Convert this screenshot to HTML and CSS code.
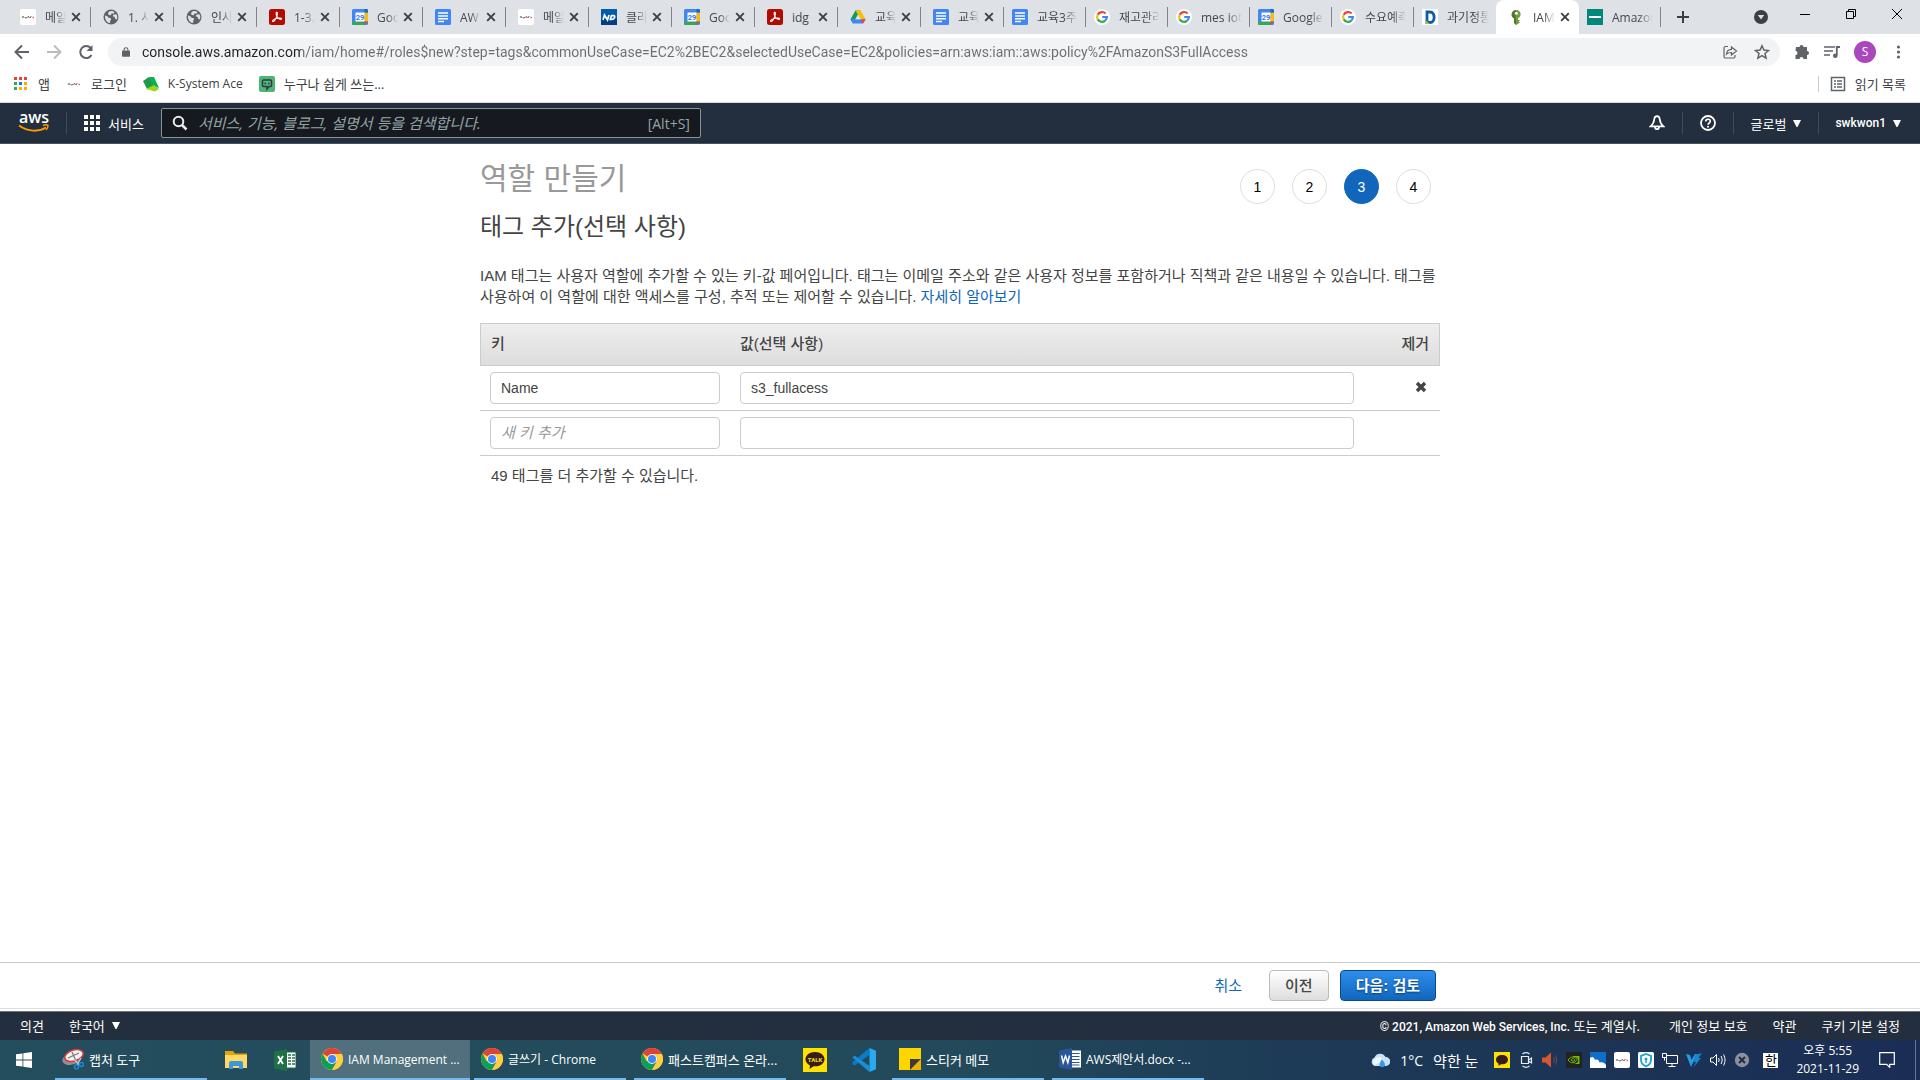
FILE: index.html
```html
<!DOCTYPE html>
<html lang="ko">
<head>
    <meta charset="UTF-8">
    <meta name="viewport" content="width=device-width, initial-scale=1.0">
    <title>IAM Management Console</title>
    <link rel="stylesheet" href="styles.css">
</head>
<body>
    <!-- shared icons -->
    <svg class="sprite" aria-hidden="true">
        <symbol id="i-close" viewBox="0 0 10 10"><path d="M1.2 1.2l7.6 7.6M8.8 1.2L1.2 8.8" stroke="#3c4043" stroke-width="1.9" fill="none"/></symbol>
        <symbol id="i-brand" viewBox="0 0 16 16"><rect width="16" height="16" rx="2" fill="#fff"/><path d="M2 9l1-2 1 2M5 8v1h1.500V8M9.500 8v1M10.500 9V7.500h1" stroke="#5b6a80" stroke-width=".8" fill="none"/><path d="M7.500 9l.8-2 1 2M12.500 8l1.500 1M14 8l-1.500 1" stroke="#c0505a" stroke-width=".8" fill="none"/></symbol>
        <symbol id="i-globe" viewBox="0 0 16 16"><circle cx="8" cy="8" r="7.500" fill="#5f6368"/><path d="M2 6.500c2 .3 3 1 3.500 2.200l2.200.5c.8.6.2 1.600-.4 2.300l-.3 2.600C4 13.800 1.800 11 2 6.500zM6 2.600c1.700-.8 4-.8 5.500.3l-.8 1.600H8.500L7.800 6.200 5.700 6 5 4.200zM13.700 5.500c.8 1.800.7 3.700 0 5l-1.500-.6-.5-2-1.900-.6.5-1.600 2-.4z" fill="#dee1e6"/></symbol>
        <symbol id="i-pdf" viewBox="0 0 16 16"><rect width="16" height="16" rx="2.500" fill="#b30b00"/><path d="M7.400 3.300c1.400-.6 1.100 2.300.4 4.100C7 9.600 5.200 12.700 3.900 12.500c-1.300-.5 1-2.200 3.200-2.900 2.400-.8 5.300-.9 5.500.1.100 1.300-2.400.5-3.700-.9C7.600 7.400 6.500 4 7.400 3.300z" fill="none" stroke="#fff" stroke-width="1.100"/></symbol>
        <symbol id="i-cal" viewBox="0 0 16 16"><rect width="16" height="16" rx="1.500" fill="#4285f4"/><path d="M12.500 3.500H16v9h-3.500z" fill="#fbbc04"/><path d="M0 12.500h12.500V16H1.500A1.500 1.500 0 0 1 0 14.500z" fill="#34a853"/><path d="M12.500 12.500H16L12.500 16z" fill="#ea4335"/><path d="M12.500 0h2A1.500 1.500 0 0 1 16 1.500v2h-3.500z" fill="#1967d2"/><path d="M3.500 3.500h9v9h-9z" fill="#fff"/><text x="8" y="10.700" font-size="7.500" font-weight="700" text-anchor="middle" fill="#3b78e7" font-family="Roboto, sans-serif">29</text></symbol>
        <symbol id="i-doc" viewBox="0 0 16 16"><rect width="16" height="16" rx="1.500" fill="#4285f4"/><path d="M3 4h10M3 7h10M3 9.800h10M3 12.600h6" stroke="#fff" stroke-width="1.500"/></symbol>
        <symbol id="i-nd" viewBox="0 0 16 16"><rect width="16" height="16" fill="#015cab"/><path d="M0 10h16v6H0z" fill="#023f80"/><path d="M2 11l1.500-5 3 5L8 6M9.300 10.400l1.200-3.800h2c2.200 0 1 3.800-1.200 3.800z" stroke="#fff" stroke-width="1.700" fill="none"/></symbol>
        <symbol id="i-drive" viewBox="0 0 16 16"><path d="M5.500 1.500h5L8 5.700 3 14.500.5 10.300z" fill="#0f9d58"/><path d="M5.500 1.500h5l5.100 8.800h-5z" fill="#fbbc04"/><path d="M3.800 10.300h11.800L13 14.500H3l-2.500-4.200z" fill="#4285f4"/><path d="M11 10.300h4.600L13 14.500z" fill="#ea4335"/><path d="M8 5.700l2.700 4.600H5.300z" fill="#dee1e6"/></symbol>
        <symbol id="i-google" viewBox="0 0 16 16"><circle cx="8" cy="8" r="8" fill="#fff"/><path d="M11.600 4.500A4.900 4.900 0 0 0 3.700 5.700" stroke="#ea4335" stroke-width="2.200" fill="none"/><path d="M3.700 5.700a4.900 4.900 0 0 0 0 4.700" stroke="#fbbc04" stroke-width="2.200" fill="none"/><path d="M3.700 10.400a4.900 4.900 0 0 0 7.500 1.200" stroke="#34a853" stroke-width="2.200" fill="none"/><path d="M8.200 8h4.700c0 1.500-.6 2.700-1.700 3.600" stroke="#4285f4" stroke-width="2.200" fill="none"/></symbol>
        <symbol id="i-chrome" viewBox="0 0 22 22"><circle cx="11" cy="11" r="11" fill="#ffcd40"/><path d="M11 11L1.500 5.500a11 11 0 0 1 19 0z" fill="#db4437"/><path d="M1.500 5.500A11 11 0 0 0 11 22l5-8.500-10.500-.6z" fill="#0f9d58"/><path d="M11 6h9.800a11 11 0 0 1-9.800 16l4.700-8.300z" fill="#ffcd40"/><circle cx="11" cy="11" r="5" fill="#f1f1f1"/><circle cx="11" cy="11" r="4" fill="#4285f4"/></symbol>
        <symbol id="i-caret" viewBox="0 0 8 7"><path d="M0 0h8L4.500 7h-1z" fill="#fff"/></symbol>
    </svg>

    <!-- tab strip -->
    <div class="tabs">
        <div class="tab"><svg class="fav"><use href="#i-brand"/></svg><span class="tab-title">메일</span><button class="tab-close" aria-label="닫기"><svg><use href="#i-close"/></svg></button></div>
        <div class="tab"><svg class="fav"><use href="#i-globe"/></svg><span class="tab-title">1. 사</span><button class="tab-close" aria-label="닫기"><svg><use href="#i-close"/></svg></button></div>
        <div class="tab"><svg class="fav"><use href="#i-globe"/></svg><span class="tab-title">인사</span><button class="tab-close" aria-label="닫기"><svg><use href="#i-close"/></svg></button></div>
        <div class="tab"><svg class="fav"><use href="#i-pdf"/></svg><span class="tab-title">1-3.</span><button class="tab-close" aria-label="닫기"><svg><use href="#i-close"/></svg></button></div>
        <div class="tab"><svg class="fav"><use href="#i-cal"/></svg><span class="tab-title">Goo</span><button class="tab-close" aria-label="닫기"><svg><use href="#i-close"/></svg></button></div>
        <div class="tab"><svg class="fav"><use href="#i-doc"/></svg><span class="tab-title">AW</span><button class="tab-close" aria-label="닫기"><svg><use href="#i-close"/></svg></button></div>
        <div class="tab"><svg class="fav"><use href="#i-brand"/></svg><span class="tab-title">메일</span><button class="tab-close" aria-label="닫기"><svg><use href="#i-close"/></svg></button></div>
        <div class="tab"><svg class="fav"><use href="#i-nd"/></svg><span class="tab-title">클라</span><button class="tab-close" aria-label="닫기"><svg><use href="#i-close"/></svg></button></div>
        <div class="tab"><svg class="fav"><use href="#i-cal"/></svg><span class="tab-title">Goo</span><button class="tab-close" aria-label="닫기"><svg><use href="#i-close"/></svg></button></div>
        <div class="tab"><svg class="fav"><use href="#i-pdf"/></svg><span class="tab-title short">idg</span><button class="tab-close" aria-label="닫기"><svg><use href="#i-close"/></svg></button></div>
        <div class="tab"><svg class="fav"><use href="#i-drive"/></svg><span class="tab-title">교육</span><button class="tab-close" aria-label="닫기"><svg><use href="#i-close"/></svg></button></div>
        <div class="tab"><svg class="fav"><use href="#i-doc"/></svg><span class="tab-title">교육</span><button class="tab-close" aria-label="닫기"><svg><use href="#i-close"/></svg></button></div>
        <div class="tab narrow"><svg class="fav"><use href="#i-doc"/></svg><span class="tab-title">교육3주</span></div>
        <div class="tab narrow"><svg class="fav"><use href="#i-google"/></svg><span class="tab-title">재고관리</span></div>
        <div class="tab narrow"><svg class="fav"><use href="#i-google"/></svg><span class="tab-title">mes iot</span></div>
        <div class="tab narrow"><svg class="fav"><use href="#i-cal"/></svg><span class="tab-title">Google</span></div>
        <div class="tab narrow"><svg class="fav"><use href="#i-google"/></svg><span class="tab-title">수요예측</span></div>
        <div class="tab narrow last"><svg class="fav" viewBox="0 0 16 16"><rect width="16" height="16" fill="#fff"/><path d="M5 3h3c5.500 0 5.500 10.500 0 10.500H5z" fill="none" stroke="#0f5ba8" stroke-width="2.800"/><path d="M3.500 11v4H8z" fill="#a4c22d"/></svg><span class="tab-title">과기정통</span></div>
        <div class="tab active"><svg class="fav" viewBox="0 0 16 16"><path d="M8 1a4.500 4.500 0 0 0-2 8.500V14l2 2 1.500-1.200V1.300z" fill="#4b7a2b"/><path d="M8 1c5.500 0 6 6.500 2 8.300v1.200l2 1-1.500 1 1.500 1L8 16z" fill="#759c3e"/><circle cx="8.300" cy="4.200" r="1.500" fill="#fff"/></svg><span class="tab-title">IAM</span><button class="tab-close" aria-label="닫기"><svg><use href="#i-close"/></svg></button></div>
        <div class="tab narrow"><svg class="fav" viewBox="0 0 16 16"><path d="M0 0h16v16H0z" fill="#00897b"/><path d="M2 8h12" stroke="#fff" stroke-width="2"/></svg><span class="tab-title">Amazon</span></div>
        <button class="new-tab" aria-label="새 탭"><svg viewBox="0 0 12 12"><path d="M6 0v12M0 6h12" stroke="#3c4043" stroke-width="2"/></svg></button>
        <div class="win-buttons">
            <button class="tab-search" aria-label="탭 검색"><svg viewBox="0 0 14 14"><circle cx="7" cy="7" r="7" fill="#3c4043"/><path d="M3.800 5h6.400L7 9.500z" fill="#dee1e6"/></svg></button>
            <button aria-label="최소화"><svg viewBox="0 0 10 10"><path d="M0 5.500h10" stroke="#000"/></svg></button>
            <button aria-label="복원"><svg viewBox="0 0 10 10"><path d="M.5 2.500h7v7h-7zM2.500 2.500v-2h7v7h-2" fill="none" stroke="#000"/></svg></button>
            <button aria-label="창 닫기"><svg viewBox="0 0 10 10"><path d="M0 0l10 10M10 0L0 10" stroke="#000"/></svg></button>
        </div>
    </div>

    <!-- address bar -->
    <div class="toolbar">
        <button class="tool" aria-label="뒤로"><svg viewBox="0 0 16 16"><path d="M15 8H2M8 1.500L1.500 8 8 14.500" fill="none" stroke="#5f6368" stroke-width="2"/></svg></button>
        <button class="tool" aria-label="앞으로"><svg viewBox="0 0 16 16"><path d="M1 8h13M8 1.500L14.500 8 8 14.500" fill="none" stroke="#babcbe" stroke-width="2"/></svg></button>
        <button class="tool" aria-label="새로고침"><svg viewBox="0 0 16 16"><path d="M13.500 11A6 6 0 1 1 12.700 4" fill="none" stroke="#5f6368" stroke-width="2"/><path d="M14.500 1v6h-6z" fill="#5f6368"/></svg></button>
        <div class="omnibox">
            <svg class="lock" viewBox="0 0 10 12"><path d="M1 4h8a1 1 0 0 1 1 1v6a1 1 0 0 1-1 1H1a1 1 0 0 1-1-1V5a1 1 0 0 1 1-1z" fill="#5f6368"/><path d="M2.600 4.500V3a2.400 2.400 0 0 1 4.800 0v1.500" fill="none" stroke="#5f6368" stroke-width="1.300"/></svg>
            <input type="text" class="url" aria-label="주소" value="console.aws.amazon.com/iam/home#/roles$new?step=tags&amp;commonUseCase=EC2%2BEC2&amp;selectedUseCase=EC2&amp;policies=arn:aws:iam::aws:policy%2FAmazonS3FullAccess">
            <svg class="ob-icon" viewBox="0 0 16 16"><path d="M6 2.500H3.500A1.500 1.500 0 0 0 2 4v8.500A1.500 1.500 0 0 0 3.500 14h8a1.500 1.500 0 0 0 1.500-1.500V11M4.500 10c.3-3 2-4.500 5-4.600V3L14.500 7l-5 4V8.500c-2.500 0-4 .4-5 1.500z" fill="none" stroke="#5f6368" stroke-width="1.200"/></svg>
            <svg class="ob-icon" viewBox="0 0 16 16"><path d="M8 1.800l1.900 4.300 4.600.4-3.500 3 1.100 4.600L8 11.700l-4.100 2.400L5 9.500l-3.500-3 4.600-.4z" fill="none" stroke="#5f6368" stroke-width="1.500"/></svg>
        </div>
        <div class="toolbar-right">
            <svg viewBox="0 0 16 16"><path d="M2 3h3.500a2 2 0 0 1 4 0H13v4a2 2 0 0 1 0 4v4H9.500a2 2 0 0 0-4 0H1.500v-4a2 2 0 0 0 0-4z" fill="#5f6368"/></svg>
            <svg viewBox="0 0 16 16"><path d="M0 3h11M0 7h9M0 11h6" stroke="#5f6368" stroke-width="1.600"/><path d="M16 3h-3.200v8" fill="none" stroke="#5f6368" stroke-width="1.800"/><circle cx="11.300" cy="11.800" r="2.300" fill="#5f6368"/></svg>
            <span class="avatar">S</span>
            <svg viewBox="0 0 16 16"><circle cx="8.500" cy="3" r="1.600" fill="#5f6368"/><circle cx="8.500" cy="8" r="1.600" fill="#5f6368"/><circle cx="8.500" cy="13" r="1.600" fill="#5f6368"/></svg>
        </div>
    </div>

    <!-- bookmarks -->
    <div class="bookmarks">
        <a href="#"><svg class="apps" viewBox="0 0 13 13"><path d="M0 0h3v3H0zM5 0h3v3H5zM10 0h3v3h-3z" fill="#ea4335"/><path d="M0 5h3v3H0zM0 10h3v3H0z" fill="#34a853"/><path d="M5 5h3v3H5z" fill="#1a73e8"/><path d="M10 5h3v3h-3zM5 10h3v3H5zM10 10h3v3h-3z" fill="#fbab04"/></svg>앱</a>
        <a href="#"><svg><use href="#i-brand"/></svg>로그인</a>
        <a href="#" class="latin"><svg viewBox="0 0 16 16"><path d="M0 5l6-4 6 10-8 2z" fill="#1d9b4d"/><path d="M6 1l5 0 5 11-6-2z" fill="#0bb04f"/><path d="M3 13l8-4 5 4-4 2.500z" fill="#9bd51f"/></svg>K-System Ace</a>
        <a href="#"><svg viewBox="0 0 16 16"><rect width="16" height="16" rx="2" fill="#4db673"/><path d="M4.500 4h7a1 1 0 0 1 1 1v4.500a1 1 0 0 1-1 1H10L8 13v-2.500H4.500a1 1 0 0 1-1-1V5a1 1 0 0 1 1-1zM5.500 7.500h1.500M9 7.500h1.500" fill="none" stroke="#2d3a4b" stroke-width="1.500"/></svg>누구나 쉽게 쓰는...</a>
        <a href="#" class="reading"><svg viewBox="0 0 16 16"><path d="M1.500 1.500h13v13h-13z" fill="none" stroke="#5f6368" stroke-width="1.500"/><path d="M4 5h2M4 8h2M4 11h2M7 5h5M7 8h5M7 11h5" stroke="#5f6368" stroke-width="1.500"/></svg>읽기 목록</a>
    </div>

    <!-- console header -->
    <header class="aws-nav">
        <a href="#" class="logo" aria-label="aws"><svg viewBox="0 0 32 22"><text x="16" y="11" text-anchor="middle" font-family="Open Sans, sans-serif" font-weight="600" font-size="16" fill="#fff">aws</text><path d="M1 13.500c9 6.500 20 6.500 27 2" fill="none" stroke="#f90" stroke-width="2"/><path d="M25 13.500c2-1 4-1 5 0 0 1.500-.5 3-2 4.500" fill="none" stroke="#f90" stroke-width="1.500"/></svg></a>
        <button class="nav-button services"><svg viewBox="0 0 16 16"><path d="M0 0h4v4H0zM6 0h4v4H6zM12 0h4v4h-4zM0 6h4v4H0zM6 6h4v4H6zM12 6h4v4h-4zM0 12h4v4H0zM6 12h4v4H6zM12 12h4v4h-4z" fill="#fff"/></svg>서비스</button>
        <div class="search">
            <svg viewBox="0 0 16 16"><circle cx="6.500" cy="6.500" r="4.800" fill="none" stroke="#eaeded" stroke-width="2"/><path d="M10 10l4.500 4.500" stroke="#eaeded" stroke-width="2.500"/></svg>
            <input type="text" aria-label="검색" placeholder="서비스, 기능, 블로그, 설명서 등을 검색합니다.">
            <span>[Alt+S]</span>
        </div>
        <div class="nav-right">
            <button class="nav-button icon-only" aria-label="알림"><svg viewBox="0 0 16 16"><path d="M8 1.200c-1.800 0-2.600 1.300-2.800 3.300C5 7 4 9.300 1.600 11.300h12.800C12 9.300 11 7 10.800 4.500 10.600 2.500 9.800 1.200 8 1.200z" fill="none" stroke="#fff" stroke-width="1.700"/><path d="M6 12a2 2.200 0 0 0 4 0" fill="none" stroke="#fff" stroke-width="1.800"/></svg></button>
            <button class="nav-button icon-only" aria-label="도움말"><svg viewBox="0 0 16 16"><circle cx="8" cy="8" r="7" fill="none" stroke="#fff" stroke-width="1.800"/><path d="M5.700 6.500C5.700 3.500 10.300 3.500 10.300 6.300 10.300 8 8 8 8 9.800" fill="none" stroke="#fff" stroke-width="1.600"/><circle cx="8" cy="11.800" r="1" fill="#fff"/></svg></button>
            <button class="nav-button">글로벌<svg class="caret"><use href="#i-caret"/></svg></button>
            <button class="nav-button account">swkwon1<svg class="caret"><use href="#i-caret"/></svg></button>
        </div>
    </header>

    <main class="content">
        <div class="wizard">
            <div class="wizard-head">
                <h1>역할 만들기</h1>
                <ol class="steps">
                    <li>1</li>
                    <li>2</li>
                    <li class="current">3</li>
                    <li>4</li>
                </ol>
            </div>
            <h2>태그 추가(선택 사항)</h2>
            <p class="description">IAM 태그는 사용자 역할에 추가할 수 있는 키-값 페어입니다. 태그는 이메일 주소와 같은 사용자 정보를 포함하거나 직책과 같은 내용일 수 있습니다. 태그를 사용하여 이 역할에 대한 액세스를 구성, 추적 또는 제어할 수 있습니다. <a href="#">자세히 알아보기</a></p>
            <table class="tags">
                <thead>
                    <tr>
                        <th class="col-key">키</th>
                        <th>값(선택 사항)</th>
                        <th class="col-remove">제거</th>
                    </tr>
                </thead>
                <tbody>
                    <tr>
                        <td><input type="text" aria-label="키" value="Name"></td>
                        <td><input type="text" aria-label="값" value="s3_fullacess"></td>
                        <td class="remove"><button aria-label="제거"><svg viewBox="0 0 12 12"><path d="M2 2l8 8M10 2l-8 8" stroke="#444" stroke-width="3.400"/></svg></button></td>
                    </tr>
                    <tr>
                        <td><input type="text" aria-label="새 키" placeholder="새 키 추가"></td>
                        <td><input type="text" aria-label="새 값"></td>
                        <td></td>
                    </tr>
                </tbody>
            </table>
            <p class="remaining">49 태그를 더 추가할 수 있습니다.</p>
        </div>
    </main>

    <div class="actions">
        <div class="actions-inner">
            <a href="#">취소</a>
            <button class="btn">이전</button>
            <button class="btn primary">다음: 검토</button>
        </div>
    </div>

    <footer class="aws-footer">
        <a href="#">의견</a>
        <button class="language">한국어<svg class="caret"><use href="#i-caret"/></svg></button>
        <span class="copyright"><b>© 2021, Amazon Web Services, Inc.</b> 또는 계열사.</span>
        <a href="#">개인 정보 보호</a>
        <a href="#">약관</a>
        <a href="#">쿠키 기본 설정</a>
    </footer>

    <!-- windows taskbar -->
    <div class="taskbar">
        <button class="pin start" aria-label="시작"><svg viewBox="0 0 16 16"><path d="M0 2.300L6.500 1.400v6.200H0zM7.300 1.300L16 0v7.600H7.300zM0 8.400h6.500v6.200L0 13.700zM7.300 8.400H16V16l-8.700-1.300z" fill="#fff"/></svg></button>
        <button class="task"><svg viewBox="0 0 22 22"><ellipse cx="10" cy="10.500" rx="10" ry="6" fill="#8d9095" transform="rotate(-18 10 10.500)"/><ellipse cx="12" cy="7.500" rx="9.500" ry="5.500" fill="#f3f3f5" stroke="#d43a3a" stroke-width="1.500" transform="rotate(-18 12 7.500)"/><path d="M6 10l11-5M10 4l5 11" stroke="#777" stroke-width="1.200"/><path d="M12 11l5 6M19 10l-4 7" stroke="#b9c3cc" stroke-width="1.500"/><circle cx="14.500" cy="19" r="2" fill="none" stroke="#1f86d0" stroke-width="1.600"/><circle cx="19.500" cy="16.500" r="2" fill="none" stroke="#1f86d0" stroke-width="1.600"/></svg><span>캡처 도구</span></button>
        <button class="pin" aria-label="파일 탐색기"><svg viewBox="0 0 22 22"><path d="M0 2h8l2 2.500h12V19H0z" fill="#e4a50b"/><path d="M0 6h22v13H0z" fill="#ffd868"/><path d="M4 20v-6a2 2 0 0 1 2-2h10a2 2 0 0 1 2 2v6h-4v-3H8v3z" fill="#3b96dd"/></svg></button>
        <button class="pin" aria-label="Excel"><svg viewBox="0 0 22 22"><path d="M12 3h10v16H12z" fill="#fff" stroke="#217346"/><path d="M14 6h3M18 6h3M14 9h3M18 9h3M14 12h3M18 12h3M14 15h3M18 15h3" stroke="#217346" stroke-width="1.500"/><path d="M0 2.500L13 0v22L0 19.500z" fill="#1e7145"/><path d="M4 7l5 8M9 7l-5 8" stroke="#fff" stroke-width="1.900"/></svg></button>
        <button class="task current latin"><svg><use href="#i-chrome"/></svg><span>IAM Management ...</span></button>
        <button class="task latin"><svg><use href="#i-chrome"/></svg><span>글쓰기 - Chrome</span></button>
        <button class="task"><svg><use href="#i-chrome"/></svg><span>패스트캠퍼스 온라...</span></button>
        <button class="pin" aria-label="카카오톡"><svg class="large" viewBox="0 0 24 24"><path d="M0 0h24v24H0z" fill="#ffe100"/><path d="M12 4c-5.500 0-9.500 3.200-9.500 7.200 0 2.600 1.800 4.900 4.500 6.200L6.500 21l4-2.700c6 .6 11-2.600 11-7.100C21.500 7.200 17.500 4 12 4z" fill="#371c1d"/><text x="12" y="13.500" text-anchor="middle" font-size="6" font-weight="700" font-family="Roboto, sans-serif" fill="#ffe100">TALK</text></svg></button>
        <button class="pin" aria-label="Visual Studio Code"><svg class="large" viewBox="0 0 24 24"><path d="M17.500 0v7L2.500 17.500.5 16v-2z" fill="#0a7bc7"/><path d="M.5 9.500L2.500 7.500l15 10.500v6z" fill="#1a8fd6"/><path d="M17.500 0L24 2.800v18.400L17.500 24z" fill="#29a9f0"/></svg></button>
        <button class="task"><svg viewBox="0 0 22 22"><path d="M0 0h22v11L11 22H0z" fill="#ffd500"/><path d="M11 22V11h11z" fill="#3a3a3a"/><path d="M22 11v11H11z" fill="#f0b400"/></svg><span>스티커 메모</span></button>
        <button class="task latin"><svg viewBox="0 0 22 22"><path d="M12 2.500h10v17H12z" fill="#fff"/><path d="M13 5.500h7.500M13 8.500h7.500M13 11.500h7.500M13 14.500h7.500M13 17h7.500" stroke="#2b579a" stroke-width="1.200"/><path d="M0 2.500L13 0v22L0 19.500z" fill="#2b579a"/><path d="M2.500 7.500l1.700 7 2.300-6.500 2.300 6.500 1.700-7" fill="none" stroke="#fff" stroke-width="1.500"/></svg><span>AWS제안서.docx -...</span></button>
        <div class="tray">
            <div class="weather"><svg viewBox="0 0 20 16"><path d="M5 14a4.500 4.500 0 0 1-.5-8.500A6 6 0 0 1 15.500 5 4.500 4.500 0 0 1 16 14z" fill="#c5e2fa"/><path d="M4 13a4.500 4.500 0 0 1 2-7c4-2 7 0 8 3z" fill="#eef7ff"/><path d="M12 7c2 3 3 4.500 3 6a2.800 2.800 0 0 1-5.500 0c0-1.500 1-3.500 2.500-6z" fill="#3b96e8"/></svg><span>1°C</span><span class="condition">약한 눈</span></div>
            <div class="tray-icons">
                <svg viewBox="0 0 16 16"><path d="M0 0h16v16H0z" fill="#ffe100"/><path d="M8 3c-3.500 0-6 2-6 4.700 0 1.700 1 3 2.700 4L4.500 14l2.500-1.700c4 .3 7-1.700 7-4.600C14 5 11.500 3 8 3z" fill="#371c1d"/></svg>
                <svg viewBox="0 0 16 16"><path d="M3.500 4.500h7v7h-7zM10.500 8l3-2v5l-3-2M4.500 2c2-1.500 5-1.500 7 0M4.500 14c2 1.500 5 1.500 7 0" fill="none" stroke="#e6edf2" stroke-width="1.200"/></svg>
                <svg viewBox="0 0 16 16"><path d="M0 5.500h3.500L9 .5v15l-5.500-5H0z" fill="#d9572e"/><path d="M11.500 5c1 2 1 4 0 6M13.500 3.500c1.600 3 1.600 6 0 9" fill="none" stroke="#7b4a51"/></svg>
                <svg viewBox="0 0 16 16"><path d="M0 0h16v16H0z" fill="#202322"/><path d="M2 8c3-4 7-4 9-.5-2 4-6 4.500-9 .5zM5 8c1-2 3-2 4 0-1 1.500-3 1.500-4 0z" fill="none" stroke="#76b900"/><path d="M7 4h6.500v8H8c4-1 5-3 3.500-5.500C10 5 9 4.800 7 5z" fill="#76b900"/></svg>
                <svg viewBox="0 0 16 16"><path d="M0 0h16v16H0z" fill="#0f6fc6"/><path d="M0 16V6c2-2 4-1 5 2 2-1 4 0 4.500 2.500C12 9.500 15 11 16 13v3z" fill="#fff"/></svg>
                <svg><use href="#i-brand"/></svg>
                <svg viewBox="0 0 16 16"><rect width="16" height="16" rx="1.500" fill="#fff"/><path d="M8 2l5 1.800V8c0 3-2 5-5 6.300C5 13 3 11 3 8V3.800z" fill="#fff" stroke="#1ba2d5" stroke-width="1.800"/><circle cx="8" cy="7" r="1.500" fill="#1ba2d5"/><path d="M7.300 7.500h1.400V11H7.300z" fill="#1ba2d5"/></svg>
                <svg viewBox="0 0 16 16"><path d="M4.500 3.500h11v8h-11zM10 11.500v3M6.500 14.500h7M.5 1.500h4v4h-4zM2.500 5.500v3" fill="none" stroke="#fff"/></svg>
                <svg viewBox="0 0 16 16"><path d="M0 2l4 1 1.500 5L9 2h2L5 15z" fill="#1fa0e6"/><path d="M9 3l7-2-3.500 5H15L7 16l3-6H8z" fill="#1787d0"/></svg>
                <svg viewBox="0 0 16 16"><path d="M.5 6h2.500l3.500-3.500v11L3 10H.5zM8.500 6c.8 1.300.8 2.700 0 4M11 4c1.500 2.600 1.500 5.400 0 8M13.500 2.500c2 3.500 2 7.500 0 11" fill="none" stroke="#fff"/></svg>
                <svg viewBox="0 0 16 16"><circle cx="8" cy="8" r="7.200" fill="#8a919e"/><path d="M5 5l6 6M11 5l-6 6" stroke="#222c40" stroke-width="2"/></svg>
            </div>
            <span class="ime">한</span>
            <div class="clock"><span>오후 5:55</span><span>2021-11-29</span></div>
            <button class="notify" aria-label="알림 센터"><svg viewBox="0 0 16 16"><path d="M.7.700h14.600v11.600h-4.600v3l-3-3h-7z" fill="none" stroke="#fff" stroke-width="1.200"/></svg></button>
        </div>
    </div>
</body>
</html>
```
FILE: styles.css
```css
* {
    box-sizing: border-box;
}

body {
    margin: 0;
    min-height: 100vh;
    display: flex;
    flex-direction: column;
    background-color: #fff;
    color: #444;
    font-family: "Liberation Sans", "Noto Sans CJK KR", sans-serif;
    font-size: 15px;
}

button {
    border: none;
    background: none;
    padding: 0;
    color: inherit;
    font: inherit;
    cursor: pointer;
}

a {
    color: #1166bb;
    text-decoration: none;
}

svg {
    display: block;
    flex: none;
    width: 16px;
    height: 16px;
}

.sprite {
    display: none;
}

/* Browser window */
.tabs,
.toolbar,
.bookmarks,
.aws-nav,
.aws-footer,
.taskbar {
    flex: none;
    display: flex;
    align-items: center;
    white-space: nowrap;
    font-family: "Open Sans", "Noto Sans CJK KR", sans-serif;
    font-size: 13px;
}

.tabs {
    height: 34px;
    padding-left: 8px;
    background-color: #dee1e6;
    color: #45494d;
    font-size: 12px;
}

.tab {
    display: flex;
    align-items: center;
    flex: 0 1 83px;
    min-width: 0;
    height: 20px;
    padding: 0 9px 0 12px;
    border-right: 1px solid #80858a;
}

.tab-title {
    flex: 1;
    min-width: 0;
    margin: 0 5px 0 9px;
    overflow: hidden;
    mask-image: linear-gradient(to right, #000 50%, transparent);
}

.tab-title.short {
    mask-image: none;
}

.tab-close {
    flex: none;
}

.tab-close svg {
    width: 10px;
    height: 10px;
}

.tab.narrow {
    flex-basis: 82px;
    padding: 0 7px 0 8px;
}

.tab.narrow .tab-title {
    margin-right: 0;
    mask-image: linear-gradient(to right, #000 65%, transparent);
}

.tab.last {
    border-right: none;
}

.tab.active {
    height: 34px;
    border: none;
    border-radius: 8px 8px 0 0;
    background-color: #fff;
}

.new-tab {
    margin-left: 16px;
}

.new-tab svg {
    width: 12px;
    height: 12px;
}

.win-buttons {
    display: flex;
    margin-left: auto;
}

.win-buttons button {
    display: flex;
    align-items: center;
    justify-content: center;
    width: 46px;
    height: 28px;
}

.win-buttons svg {
    width: 10px;
    height: 10px;
}

.win-buttons .tab-search {
    width: 42px;
    height: 34px;
}

.tab-search svg {
    width: 14px;
    height: 14px;
}

.toolbar {
    height: 36px;
    padding: 0 14px;
}

.tool {
    margin-right: 16px;
}

.omnibox {
    flex: 1;
    display: flex;
    align-items: center;
    height: 28px;
    margin: 0 14px 0 -2px;
    padding: 0 10px 0 14px;
    border-radius: 14px;
    background-color: #f1f3f4;
}

.lock {
    width: 8px;
    height: 12px;
}

.url {
    flex: 1;
    min-width: 0;
    margin-left: 12px;
    padding: 0;
    border: none;
    outline: none;
    font-family: Roboto, "Noto Sans CJK KR", sans-serif;
    font-size: 14px;
    /* host name is darker than the path */
    background: linear-gradient(to right, #202124 159px, #6b6f73 159px);
    background-clip: text;
    color: transparent;
}

.ob-icon {
    margin-left: 16px;
}

.toolbar-right {
    display: flex;
    align-items: center;
    gap: 14px;
}

.avatar {
    width: 22px;
    height: 22px;
    border-radius: 50%;
    background-color: #ab47bc;
    color: #fff;
    font-size: 12px;
    line-height: 22px;
    text-align: center;
}

.bookmarks {
    height: 33px;
    padding: 0 14px 5px;
    gap: 16px;
    border-bottom: 1px solid #d5d7da;
}

.bookmarks a {
    display: flex;
    align-items: center;
    gap: 9px;
    line-height: 16px;
    color: #3c4043;
}

.bookmarks .apps {
    width: 13px;
    height: 13px;
    margin-right: 2px;
}

.bookmarks .reading {
    margin-left: auto;
    padding-left: 11px;
    border-left: 1px solid #c9cccf;
}

.bookmarks .latin,
.taskbar .latin {
    font-size: 12px;
}

/* Console header */
.aws-nav {
    height: 41px;
    padding-left: 18px;
    background-color: #232f3e;
    border-bottom: 1px solid #46525f;
    color: #fff;
}

.logo svg {
    width: 32px;
    height: 22px;
}

.nav-button {
    display: flex;
    align-items: center;
    gap: 8px;
    height: 22px;
    padding: 0 17px;
    border-left: 1px solid #414b58;
}

.services {
    margin-left: 16px;
}

.search {
    display: flex;
    align-items: center;
    width: 540px;
    height: 30px;
    padding: 0 10px;
    border: 1px solid #879596;
    border-radius: 2px;
    background-color: #16191f;
    color: #95a5a6;
    font-size: 15px;
}

.search input {
    flex: 1;
    min-width: 0;
    margin-left: 10px;
    padding: 0;
    border: none;
    outline: none;
    background: none;
    color: #fff;
    font: inherit;
}

.search input::placeholder {
    color: #95a5a6;
    font-style: italic;
}

.search span {
    font-size: 14px;
}

.nav-right {
    display: flex;
    margin-left: auto;
}

.nav-right .nav-button {
    gap: 7px;
}

.nav-right .nav-button:first-child {
    border-left: none;
}

.nav-right .account {
    padding: 0 19px 0 16px;
    font-family: Roboto, sans-serif;
    font-size: 12px;
    font-weight: 500;
}

.caret {
    width: 8px;
    height: 7px;
}

/* Wizard */
.content {
    flex: 1;
}

.wizard {
    max-width: 960px;
    margin: 0 auto;
    padding-top: 17px;
}

.wizard-head {
    display: flex;
    justify-content: space-between;
    align-items: flex-start;
}

h1,
h2 {
    margin: 0;
    font-weight: 400;
}

h1 {
    color: #999;
    font-size: 30px;
    line-height: 36px;
}

h2 {
    margin-top: 14px;
    font-size: 24px;
    line-height: 32px;
}

.steps {
    display: flex;
    gap: 17px;
    margin: 8px 9px 0 0;
    padding: 0;
    height: 28px;
    list-style: none;
    font-size: 14px;
}

.steps li {
    width: 35px;
    height: 35px;
    border: 1px solid #ddd;
    border-radius: 50%;
    color: #000;
    line-height: 35px;
    text-align: center;
}

.steps .current {
    border-color: #1166bb;
    background-color: #1166bb;
    color: #fff;
}

.description {
    margin: 22px 0 16px;
    line-height: 21px;
    word-break: keep-all;
}

.tags {
    width: 100%;
    border-collapse: separate;
    border-spacing: 0;
    table-layout: fixed;
}

.tags th {
    height: 43px;
    padding: 0 10px 4px;
    border: solid #ccc;
    border-width: 1px 0;
    background: linear-gradient(#eee, #ddd);
    font-weight: 500;
    text-align: left;
}

.tags .col-key {
    width: 250px;
    border-left-width: 1px;
}

.tags .col-remove {
    width: 76px;
    border-right-width: 1px;
    text-align: right;
}

.tags td {
    height: 45px;
    padding: 6px 10px;
    border-bottom: 1px solid #ccc;
}

.tags input {
    display: block;
    width: 100%;
    height: 32px;
    padding: 0 10px;
    border: 1px solid #ccc;
    border-radius: 4px;
    color: #444;
    font: inherit;
    font-size: 14px;
}

.tags input::placeholder {
    color: #999;
    font-size: 15px;
    font-style: italic;
}

.tags .remove {
    padding: 6px 13px 8px;
}

.remove button {
    display: block;
    margin-left: auto;
}

.remove svg {
    width: 12px;
    height: 12px;
}

.remaining {
    margin: 9px 11px;
    line-height: 21px;
}

.actions {
    border-top: 1px solid #ccc;
    border-bottom: 1px solid #ddd;
    margin-bottom: 2px;
}

.actions-inner {
    display: flex;
    justify-content: flex-end;
    align-items: center;
    max-width: 960px;
    height: 45px;
    margin: 0 auto;
    padding-right: 4px;
    font-weight: 500;
}

.btn {
    height: 31px;
    margin-left: 11px;
    padding: 0 15px 2px;
    border: 1px solid #bbb;
    border-radius: 4px;
    background: linear-gradient(#fff, #ddd);
}

.actions a {
    margin-right: 16px;
    padding-bottom: 2px;
    font-weight: 400;
}

.btn.primary {
    border-color: #0a4a8a;
    background: linear-gradient(#2e8ded, #1166bb);
    color: #fff;
    font-weight: 700;
    text-shadow: 0 1px 2px #074078;
}

/* Console footer */
.aws-footer {
    height: 29px;
    padding: 0 20px 2px;
    gap: 25px;
    border-top: 1px solid #6d757e;
    background-color: #232f3e;
    color: #fff;
}

.aws-footer a {
    color: #fff;
}

.language {
    display: flex;
    align-items: center;
    gap: 7px;
}

.copyright {
    margin-left: auto;
    margin-right: 4px;
}

.copyright b {
    font-family: Roboto, sans-serif;
    font-size: 12px;
    font-weight: 500;
}

/* Taskbar */
.taskbar {
    height: 40px;
    background: linear-gradient(to right, #244d5d, #224a5b 50%, #1d3a56 68%, #1b2d55);
    color: #fff;
}

.pin {
    display: flex;
    justify-content: center;
    width: 49px;
}

.start {
    width: 48px;
    margin-right: 3px;
}

.taskbar .pin svg,
.task svg {
    width: 22px;
    height: 22px;
}

.taskbar .start svg {
    width: 16px;
    height: 16px;
}

.taskbar .pin .large {
    width: 24px;
    height: 24px;
}

.task {
    display: flex;
    align-items: center;
    gap: 5px;
    width: 152px;
    height: 40px;
    margin: 0 4px;
    padding-left: 7px;
    border-bottom: 2px solid #76b9ed;
}

.task.current {
    width: 160px;
    margin: 0 0 0 1px;
    padding-left: 11px;
    background-color: #50707d;
}

.tray {
    display: flex;
    align-items: center;
    height: 40px;
    margin-left: auto;
    margin-right: 4px;
    padding-right: 20px;
    border-right: 1px solid #6a7690;
}

.weather {
    display: flex;
    align-items: center;
    gap: 10px;
    margin-right: 16px;
    font-size: 14px;
}

.weather svg {
    width: 20px;
}

.condition {
    font-size: 15px;
}

.tray-icons {
    display: flex;
    gap: 8px;
}

.ime {
    width: 15px;
    height: 15px;
    margin: 0 18px 0 13px;
    background-color: #fff;
    color: #000;
    line-height: 15px;
    text-align: center;
}

.clock {
    display: flex;
    flex-direction: column;
    align-items: center;
    font-size: 12px;
    line-height: 18px;
}

.notify {
    margin-left: 20px;
}
```
